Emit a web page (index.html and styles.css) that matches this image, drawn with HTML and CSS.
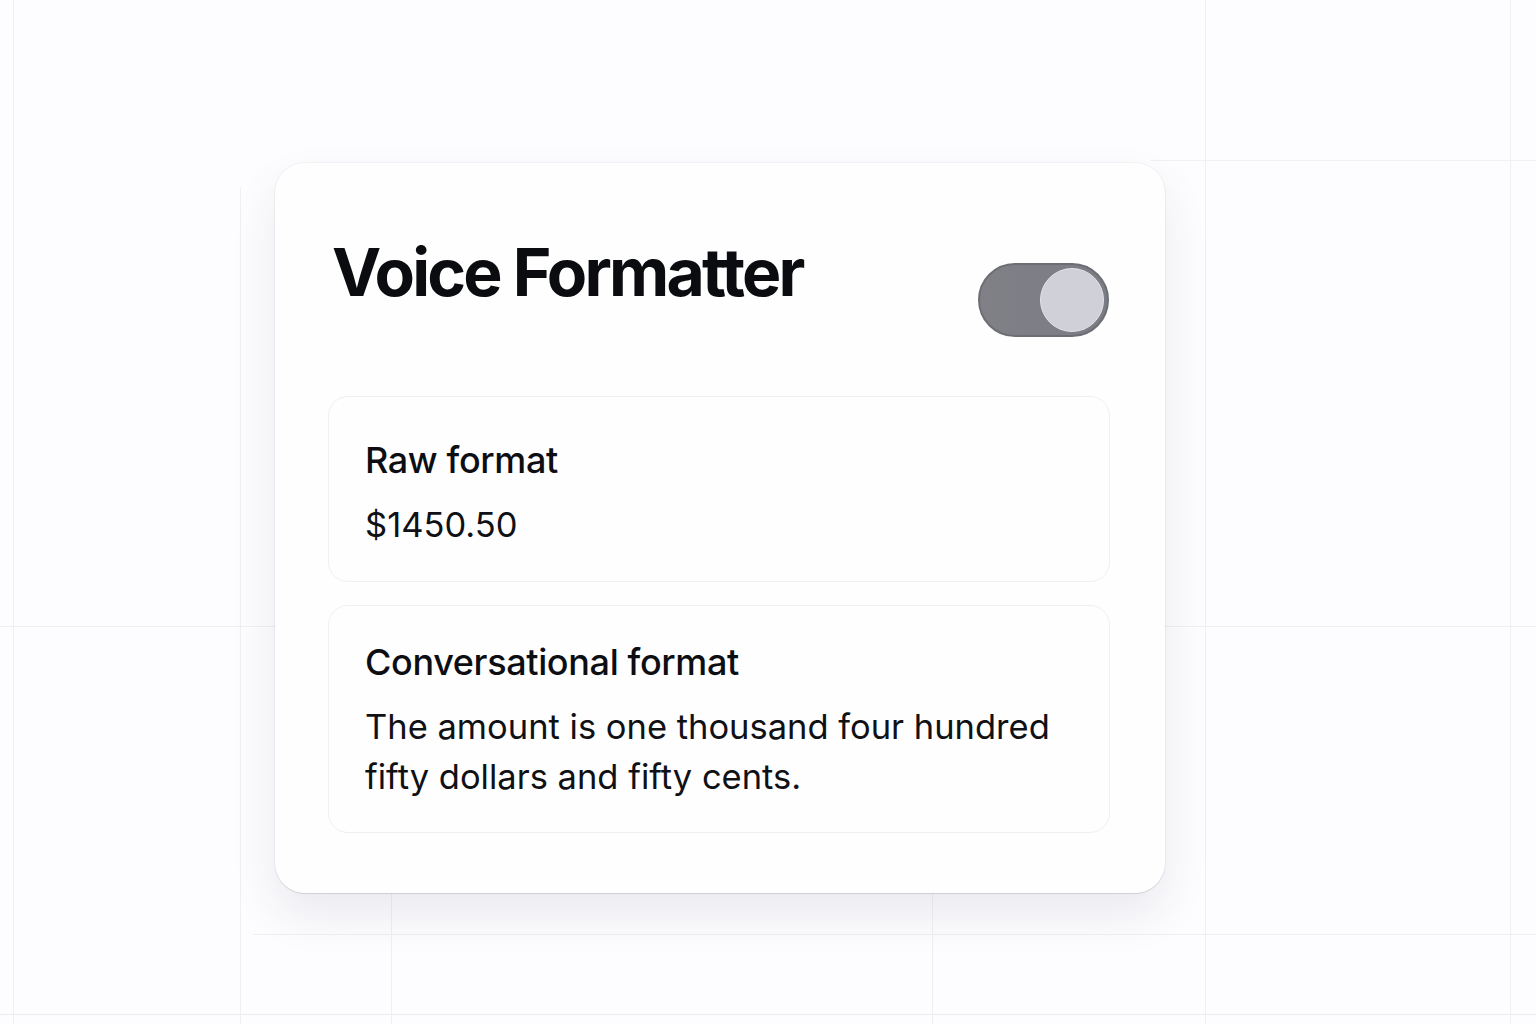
FILE: index.html
```html
<!DOCTYPE html>
<html lang="en">
<head>
<meta charset="utf-8">
<title>Voice Formatter</title>
<link rel="stylesheet" href="styles.css">
</head>
<body>
  <main class="stage">
    <section class="formatter">
      <header class="formatter-head">
        <h1 class="formatter-title">Voice Formatter</h1>
        <button class="toggle is-on" type="button" role="switch" aria-checked="true" aria-label="Conversational output">
          <span class="toggle-knob"></span>
        </button>
      </header>

      <div class="panel panel-compact">
        <h2 class="panel-label">Raw format</h2>
        <p class="panel-value">$1450.50</p>
      </div>

      <div class="panel">
        <h2 class="panel-label">Conversational format</h2>
        <p class="panel-value">The amount is one thousand four hundred fifty dollars and fifty cents.</p>
      </div>
    </section>
  </main>
</body>
</html>
```

FILE: styles.css
```css
* {
  box-sizing: border-box;
}

html,
body {
  margin: 0;
  height: 100%;
}

body {
  font-family: Inter, "Noto Sans", "Liberation Sans", sans-serif;
  color: #0c0d11;
  background-color: #fdfcfe;
  /* faint layout guides drawn across the canvas */
  background-image:
    linear-gradient(#efeff3, #efeff3),
    linear-gradient(#efeff3, #efeff3),
    linear-gradient(#efeff3, #efeff3),
    linear-gradient(#efeff3, #efeff3),
    linear-gradient(#efeff3, #efeff3),
    linear-gradient(#efeff3, #efeff3),
    linear-gradient(#efeff3, #efeff3),
    linear-gradient(#f1f1f5, #f1f1f5),
    linear-gradient(#efeff3, #efeff3),
    linear-gradient(#ececf0, #ececf0);
  background-repeat: no-repeat;
  background-position:
    13px 0,
    240px 187px,
    1205px 0,
    1510px 0,
    391px 893px,
    932px 893px,
    0 626px,
    1150px 160px,
    253px 934px,
    0 1014px;
  background-size:
    1px 100%,
    1px 837px,
    1px 100%,
    1px 100%,
    1px 131px,
    1px 131px,
    100% 1px,
    386px 1px,
    1283px 1px,
    100% 1px;
  overflow: hidden;
}

.stage {
  padding: 163px 0 0 275px;
}

.formatter {
  width: 890px;
  padding: 69px 55px 60px 53px;
  background: #fefefe;
  border-radius: 30px;
  box-shadow:
    0 0 0 1px rgba(40, 40, 70, 0.035),
    0 1px 1px rgba(30, 30, 50, 0.10),
    0 22px 46px rgba(40, 40, 80, 0.09);
  display: flex;
  flex-direction: column;
  gap: 23px;
}

.formatter-head {
  display: flex;
  justify-content: space-between;
  align-items: flex-start;
  margin-bottom: 36px;
}

.formatter-title {
  margin: 0;
  padding-left: 4px;
  font-size: 66px;
  line-height: 80px;
  font-weight: 700;
  letter-spacing: -0.042em;
  color: #0b0c10;
}

.toggle {
  position: relative;
  width: 131px;
  height: 74px;
  margin-top: 31px;
  margin-right: 1px;
  padding: 0;
  border: 2px solid #6c6e74;
  border-radius: 37px;
  background: linear-gradient(90deg, #808086, #7b7d85);
  cursor: pointer;
}

.toggle-knob {
  position: absolute;
  top: 3px;
  right: 3px;
  width: 64px;
  height: 64px;
  border-radius: 50%;
  background: #cfd0d8;
  border: 1.5px solid #e4e4ea;
}

.panel {
  padding: 34px 36px 30px;
  background: #fefeff;
  border: 1px solid #f0f0f4;
  border-radius: 20px;
}

.panel-compact {
  padding-top: 41px;
  padding-bottom: 31px;
}

.panel-label {
  margin: 0;
  font-size: 36px;
  line-height: 44px;
  font-weight: 500;
  letter-spacing: -0.01em;
  color: #0d0e12;
}

.panel-value {
  margin: 18px 0 0;
  font-size: 34.5px;
  line-height: 50px;
  font-weight: 400;
  color: #101115;
}
```
